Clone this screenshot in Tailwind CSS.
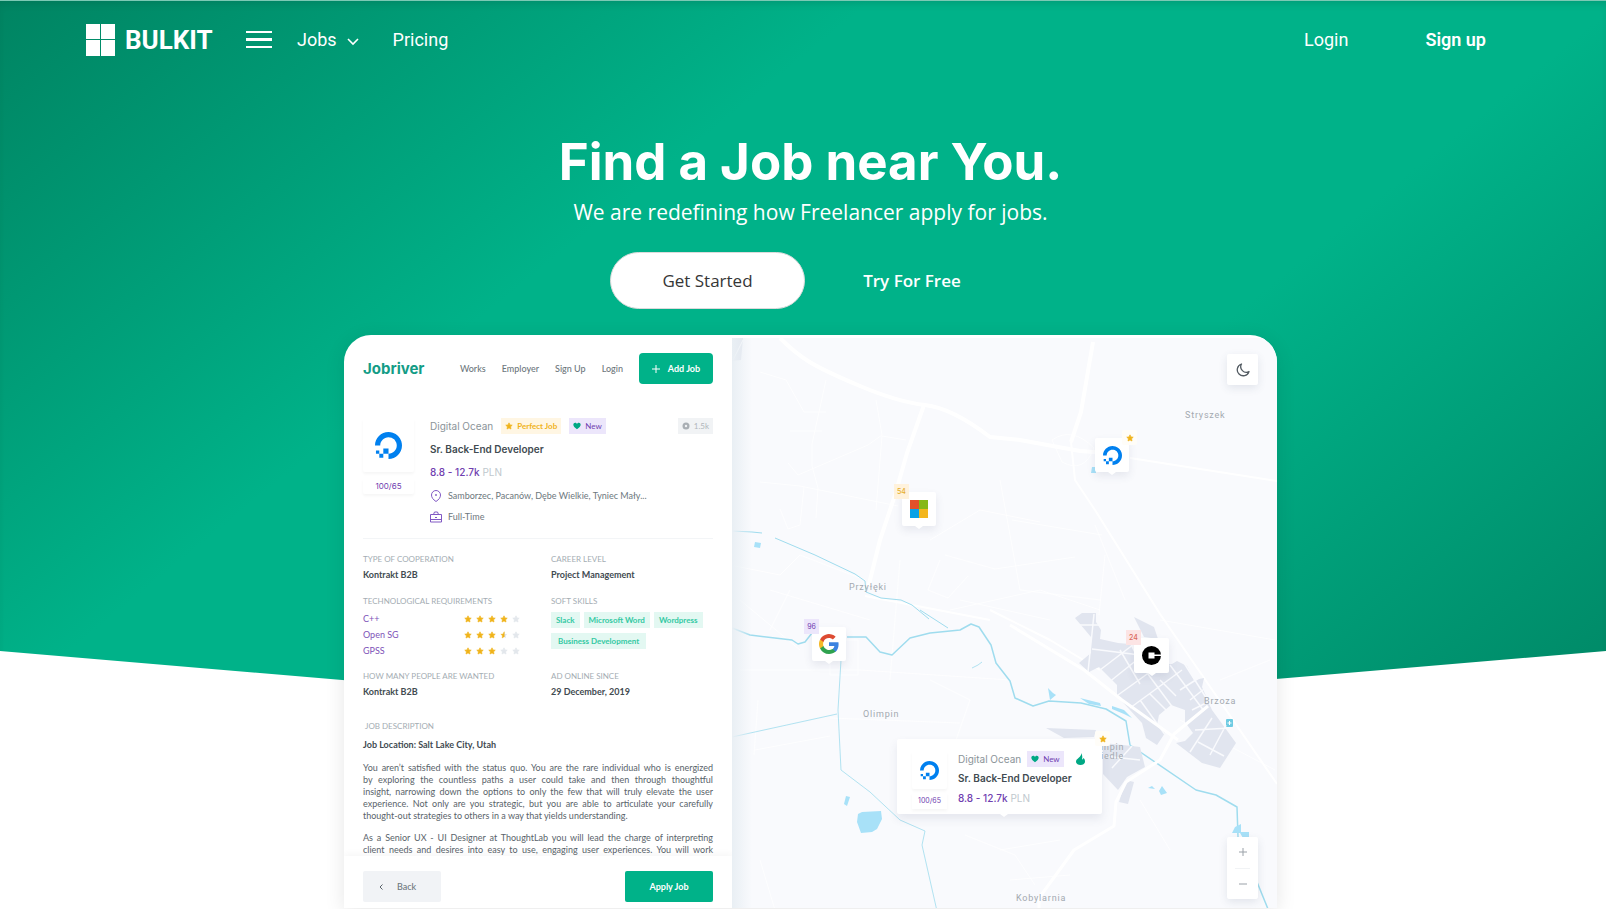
<!DOCTYPE html>
<html lang="en">
<head>
<meta charset="utf-8">
<meta name="viewport" content="width=device-width, initial-scale=1">
<title>Bulkit</title>
<script src="https://cdn.jsdelivr.net/npm/@tailwindcss/browser@4"></script>
</head>
<body class="bg-white font-['Inter',sans-serif]">
<svg class="hidden" aria-hidden="true">
  <symbol id="ocean" viewBox="0 0 24 24"><path fill="#0080ef" d="M12.04 0C5.408-.02.005 5.37.005 11.992h4.638c0-4.923 4.882-8.731 10.064-6.855a6.95 6.95 0 014.147 4.148c1.889 5.177-1.924 10.055-6.84 10.064v-4.61H7.391v4.623h4.61V24c7.86 0 13.967-7.588 11.397-15.83-1.115-3.59-3.985-6.446-7.577-7.575A12.8 12.8 0 0012.039 0zM7.39 19.362H3.828v3.564H7.39zm-3.563 0v-2.978H.85v2.978z"/></symbol>
  <symbol id="star" viewBox="0 0 24 24"><path fill="currentColor" stroke="currentColor" stroke-width="2" stroke-linejoin="round" d="M12 2.500l2.900 6.300 6.800.8-5 4.700 1.300 6.800L12 17.700l-6 3.400 1.300-6.800-5-4.700 6.800-.8z"/></symbol>
  <symbol id="halfstar" viewBox="0 0 24 24"><path fill="#dfe3ea" d="M12 2.500l2.900 6.300 6.800.8-5 4.700 1.300 6.800L12 17.700z"/><path fill="#f0b31a" stroke="#f0b31a" stroke-linejoin="round" d="M13 2.500v15l-7 3.600 1.300-6.800-5-4.700 6.800-.8L12 2.500z"/></symbol>
  <symbol id="heart" viewBox="0 0 24 24"><path fill="#00a884" d="M12 22C5 17 1 13 1 8.500 1 5 3.500 2.500 6.500 2.500c2.500 0 4.500 1.500 5.500 3.500 1-2 3-3.500 5.500-3.500C20.500 2.500 23 5 23 8.500 23 13 19 17 12 22z"/></symbol>
</svg>

<div class="relative isolate min-h-screen overflow-hidden">
  <div class="absolute inset-x-0 top-0 -z-10 h-[719px] border-t border-[#7cc9b4] bg-[linear-gradient(141deg,#008462_0%,#00b289_35%,#00b289_65%,#008765_100%)] shadow-[inset_0_6px_8px_-4px_rgba(0,60,40,0.2)] [clip-path:polygon(0_0,100%_0,100%_651px,50%_100%,0_651px)]"></div>

  <header class="flex h-20 items-center pl-[86px] pr-[120px] font-['Roboto',sans-serif] text-lg text-white">
    <a href="#" class="flex items-center gap-2.5" aria-label="Bulkit home">
      <svg class="h-8 w-[29px]" viewBox="0 0 29 32" fill="#fff"><path d="M0 0h14v15H0zM15 0h14v15H15zM0 16h14v16H0zM15 16h14v16H15z"/></svg>
      <span class="w-[88px] font-['Roboto',sans-serif] text-[26px] leading-8 font-bold">BULKIT</span>
    </a>
    <button type="button" class="ml-[33px]" aria-label="Menu">
      <svg class="h-[18px] w-[26px]" viewBox="0 0 26 18" fill="#fff"><path d="M0 0h26v2H0zM0 7h26v3H0zM0 15h26v2H0z"/></svg>
    </button>
    <nav class="ml-[25px] flex items-center gap-[34px]">
      <a href="#" class="flex items-center gap-2.5">Jobs
        <svg class="mt-1 h-2 w-3" viewBox="0 0 12 8" fill="none" stroke="#fff" stroke-width="1.600"><path d="M1 1l5 5 5-5"/></svg>
      </a>
      <a href="#">Pricing</a>
    </nav>
    <div class="ml-auto flex gap-[77px]">
      <a href="#">Login</a>
      <a href="#" class="font-semibold">Sign up</a>
    </div>
  </header>

  <main class="pl-[15px]">
    <section class="flex flex-col items-center pt-[50px] text-center text-white">
      <h1 class="text-[51px] leading-[64px] font-bold">Find a Job near You.</h1>
      <p class="mt-[3px] font-['Open_Sans',sans-serif] text-[21px] leading-[30px]">We are redefining how Freelancer apply for jobs.</p>
      <div class="mt-[25px] flex gap-2 font-['Open_Sans',sans-serif] text-[17px]">
        <button type="button" class="h-[57px] w-[195px] rounded-full border border-[#dbdbdb] bg-white text-[#363636]">Get Started</button>
        <button type="button" class="h-[57px] w-[198px] font-semibold">Try For Free</button>
      </div>
    </section>

    <section class="mx-auto mt-[26px] flex w-full max-w-[933px] overflow-hidden rounded-t-[27px] bg-white shadow-[0_4px_20px_rgba(0,0,0,0.1)]">
      <div class="flex w-[388px] shrink-0 flex-col pt-[18px] font-['Lato',sans-serif] text-[9px] text-[#6d777d]">
        <div class="px-[19px]">
          <div class="flex h-[31px] items-center">
            <a href="#" class="font-['Inter',sans-serif] text-[15px] leading-7 font-bold text-[#149c86]">Jobriver</a>
            <nav class="ml-auto flex gap-4 font-medium">
              <a href="#">Works</a><a href="#">Employer</a><a href="#">Sign Up</a><a href="#">Login</a>
            </nav>
            <button type="button" class="ml-4 flex h-[31px] w-[74px] items-center justify-center gap-2 rounded-sm bg-[#00b289] font-bold text-white">
              <svg class="size-2" viewBox="0 0 8 8" stroke="#fff"><path d="M4 0v8M0 4h8"/></svg>Add Job</button>
          </div>

          <div class="mt-[34px] flex gap-4">
            <div class="w-[51px]">
              <div class="grid h-[54px] place-items-center rounded-xs shadow-[0_2px_3px_rgba(0,0,0,0.04)]"><svg class="size-[27px]"><use href="#ocean"/></svg></div>
              <div class="mt-1.5 h-4 rounded-xs text-center font-['Inter',sans-serif] text-[8px] leading-4 text-[#7040b0] shadow-[0_2px_3px_rgba(0,0,0,0.04)]">100/65</div>
            </div>
            <div class="flex-1">
              <div class="flex h-4 items-center">
                <span class="font-['Inter',sans-serif] text-[10px] text-[#8b9499]">Digital Ocean</span>
                <span class="ml-2 flex h-4 items-center gap-1 bg-[#fff6e3] px-1 text-[8px] font-bold text-[#f0b31a]"><svg class="size-2"><use href="#star"/></svg>Perfect Job</span>
                <span class="ml-2 flex h-4 items-center gap-1 bg-[#ece6fb] px-1 text-[8px] text-[#7040b0]"><svg class="size-2"><use href="#heart"/></svg>New</span>
                <span class="ml-auto flex h-4 items-center gap-1 bg-[#f1f3f5] px-1 text-[8px] text-[#b0b6bb]"><svg class="size-2" viewBox="0 0 8 8"><circle cx="4" cy="4" r="3.500" fill="#a9afb4"/><circle cx="4" cy="4" r="1.200" fill="#f1f3f5"/></svg>1.5k</span>
              </div>
              <h2 class="mt-[7px] font-['Inter',sans-serif] text-[10px] leading-4 font-semibold text-[#424b51]">Sr. Back-End Developer</h2>
              <p class="mt-[7px] font-['Inter',sans-serif] text-[10px] leading-4 text-[#c0c8ce]"><span class="font-medium text-[#7040b0]">8.8 - 12.7k</span> PLN</p>
              <p class="mt-2 flex h-4 items-center gap-1.5"><svg class="size-3" viewBox="0 0 12 12" fill="none" stroke="#8159c4"><path d="M6 11.500C3 9.500 1.500 7.500 1.500 5a4.500 4.500 0 019 0c0 2.500-1.500 4.500-4.500 6.500z"/><circle cx="6" cy="5" r=".6"/></svg>Samborzec, Pacanów, Dębe Wielkie, Tyniec Mały...</p>
              <p class="mt-[5px] flex h-4 items-center gap-1.5"><svg class="size-3" viewBox="0 0 12 12" fill="none" stroke="#8159c4"><path d="M.5 3.500h11v7.500H.5zM3.500 3.500l1-2.500h3l1 2.500M.5 8.500h11M5 6.500h2"/></svg>Full-Time</p>
            </div>
          </div>

          <div class="mt-[13px] grid grid-cols-[188px_1fr] border-t border-[#f3f5f7] pt-3.5 leading-3">
            <div>
              <h3 class="text-[8px] leading-3 text-[#a4adb3]">TYPE OF COOPERATION</h3>
              <p class="mt-1 font-bold text-[#424b51]">Kontrakt B2B</p>
              <h3 class="mt-3.5 text-[8px] leading-3 text-[#a4adb3]">TECHNOLOGICAL REQUIREMENTS</h3>
              <ul class="mt-1.5 flex flex-col gap-1 text-[#7e53b8]">
                <li class="flex h-3 items-center">C++<span class="ml-auto mr-[31px] flex gap-1 text-[#f0b31a]"><svg class="size-2"><use href="#star"/></svg><svg class="size-2"><use href="#star"/></svg><svg class="size-2"><use href="#star"/></svg><svg class="size-2"><use href="#star"/></svg><svg class="size-2 text-[#e3e7ec]"><use href="#star"/></svg></span></li>
                <li class="flex h-3 items-center">Open SG<span class="ml-auto mr-[31px] flex gap-1 text-[#f0b31a]"><svg class="size-2"><use href="#star"/></svg><svg class="size-2"><use href="#star"/></svg><svg class="size-2"><use href="#star"/></svg><svg class="size-2"><use href="#halfstar"/></svg><svg class="size-2 text-[#e3e7ec]"><use href="#star"/></svg></span></li>
                <li class="flex h-3 items-center">GPSS<span class="ml-auto mr-[31px] flex gap-1 text-[#f0b31a]"><svg class="size-2"><use href="#star"/></svg><svg class="size-2"><use href="#star"/></svg><svg class="size-2"><use href="#star"/></svg><svg class="size-2 text-[#e3e7ec]"><use href="#star"/></svg><svg class="size-2 text-[#e3e7ec]"><use href="#star"/></svg></span></li>
              </ul>
              <h3 class="mt-[13px] text-[8px] leading-3 text-[#a4adb3]">HOW MANY PEOPLE ARE WANTED</h3>
              <p class="mt-1 font-bold text-[#424b51]">Kontrakt B2B</p>
            </div>
            <div>
              <h3 class="text-[8px] leading-3 text-[#a4adb3]">CAREER LEVEL</h3>
              <p class="mt-1 font-bold text-[#424b51]">Project Management</p>
              <h3 class="mt-3.5 text-[8px] leading-3 text-[#a4adb3]">SOFT SKILLS</h3>
              <div class="mt-[5px] flex flex-wrap gap-x-1 gap-y-[5px] text-[8px] leading-4 font-bold text-[#34c9a3]">
                <span class="bg-[#e3f8f2] px-[5px]">Slack</span><span class="bg-[#e3f8f2] px-[5px]">Microsoft Word</span><span class="bg-[#e3f8f2] px-[5px]">Wordpress</span><span class="bg-[#e3f8f2] px-[7px]">Business Development</span>
              </div>
              <h3 class="mt-[21px] text-[8px] leading-3 text-[#a4adb3]">AD ONLINE SINCE</h3>
              <p class="mt-1 font-bold text-[#424b51]">29 December, 2019</p>
            </div>
          </div>

          <h3 class="mt-[22px] pl-0.5 text-[8px] leading-3 text-[#a4adb3]">JOB DESCRIPTION</h3>
          <p class="mt-[7px] leading-3 font-bold text-[#424b51]">Job Location: Salt Lake City, Utah</p>
          <p class="mt-[11px] leading-3 text-[#59636a]">
            <span class="block [text-align-last:justify]">You aren’t satisfied with the status quo. You are the rare individual who is energized</span>
            <span class="block [text-align-last:justify]">by exploring the countless paths a user could take and then through thoughtful</span>
            <span class="block [text-align-last:justify]">insight, narrowing down the options to only the few that will truly elevate the user</span>
            <span class="block [text-align-last:justify]">experience. Not only are you strategic, but you are able to articulate your carefully</span>
            <span class="block">thought-out strategies to others in a way that yields understanding.</span>
          </p>
          <p class="mt-2.5 leading-3 text-[#59636a]">
            <span class="block [text-align-last:justify]">As a Senior UX - UI Designer at ThoughtLab you will lead the charge of interpreting</span>
            <span class="block [text-align-last:justify]">client needs and desires into easy to use, engaging user experiences. You will work</span>
          </p>
        </div>
        <div class="flex justify-between px-[19px] pt-[15px] pb-1.5 shadow-[0_-3px_6px_rgba(0,0,0,0.03)]">
          <button type="button" class="flex h-[31px] w-[78px] items-center gap-3.5 rounded-xs bg-[#f1f3f6] pl-4 font-medium"><svg class="h-1.5 w-1" viewBox="0 0 4 6" fill="none" stroke="#59636a"><path d="M3.500.5L1 3l2.500 2.500"/></svg>Back</button>
          <button type="button" class="h-[31px] w-[88px] rounded-xs bg-[#00b289] font-bold text-white">Apply Job</button>
        </div>
      </div>

      <div class="relative mt-[3px] flex-1 overflow-hidden bg-[#f9fafd]">
        <svg class="absolute inset-0 size-full" viewBox="732 338 545 571" preserveAspectRatio="xMidYMin slice" fill="none" stroke-linejoin="round" font-family="Roboto, sans-serif">
          <path fill="#e2e6ef" d="M732 338h11l-2 22-9 1z"/><path stroke="#fff" d="M743 340l-10 20"/>
          <g stroke="#fff" stroke-opacity=".75">
            <path d="M826 380l-14 64v22l6 22-2 30M760 482l40 4 98 20M876 400l6 35-14 10-70 30-10-12M790 431h32M906 440l-24-4-6 74M760 372l26 8 18 32h22M780 509l8 20 12-4 4-38M730 565l50 10 20-20 65 25M770 590l100 30M930 540l50-30 60 12M945 555l50 14 80-12M960 600l90 20M900 560l-10 120M1012 520l90 15M1020 590l80 10M1105 555l-6 60M1160 620l115 20M1125 600l-30-75M740 670h120l150 10M755 750l75-14M930 680l40 20-14 40M758 700l-4 55M830 718l130 5M760 860l15 50M965 835l50 20 20 30M1100 610l-60-20-90 20M1180 720l95 50M1220 680l50-20M1140 800l30 50M1010 880l60-5M1060 840l-60 10"/>
            <path d="M1052 440q20 -14 42 8-10 26-32 14zM830 640h28v35h-28zM940 560l-12 30 20 8 20-22M740 600l60 50M790 590l-20 40M1000 480l20 110"/>
          </g>
          <g stroke="#fff" stroke-width="3"><path stroke-width="4" d="M780 338q14 14 28 23t52 25 65 19 65 32l30 3 60 11 40 3"/><path d="M924 405l-17 48-12 42-15 45-12 48M1093 342l-12 70-10 30" stroke-width="4"/><path d="M1130 458l147 23M1071 442l4 38 20 30 65 104 117 170M865 596l125 24M990 610l60 30 50 30" stroke-width="2"/></g>
          <g stroke="#9fdcee" stroke-width="1.500">
            <path d="M732 531l20 1 10 1M775 538l40 17 40 19 10 7 1 11 15 6 20 2 11 5 17 14M920 610l28 18" stroke-width="1"/>
            <path d="M732 628l18 7 42 5 6 4 7-2 7-9M847 637h19l14 15 12 3 18-17 20-5 30-3 11-6 8 3 12 18 5 18 14 18 5 17 18 8 16-5 32 2 25 6 20 12 4 24 66 45 20 5 21 12 1 30M1257 882l11 27"/>
            <path stroke-width="1" stroke-opacity=".8" d="M841 660l-3 50 3 60 29 22 30 28 25 11-3 14 15 66M732 737l105-23M972 668l6-3 4-3"/>
          </g>
          <g fill="#a8e1f8"><path d="M857 822l1-8 4-2 19-1 1 8-5 10-5 3-11 1zM844 804l2-8 4 1-3 9zM755 542l6 1-1 5-6-1zM1048 688l5 5 3 2-6 5zM1080 698l8 2 12 3 1 3-12-2zM1112 706l12 4 8 8-8-4-12-5zM1148 788l4-2 3 3zM1162 786l5 7-6 2-2-4zM1235 827l6-3v8h8v6h-6l-3-5h-8zM1092 467h4v6h-5z"/><rect x="1226" y="719" width="7" height="8" rx="1" fill="#6fcbe2"/></g>
          <path stroke="#fff" d="M1229.500 721v4M1227.500 723h4"/>
          <g fill="#e1e5ef">
            <path d="M1075 618l7-5h14v9l5 8-1 9 18 4 12 1 10 20h32l5-3 10 5 7 14 10-2-2 9 10 23 24 33-16 25-18-5-26-20 9-2 8-8-8-11v-12l-14-5-12 10-2 10 8 8-8 12-11-7-4-15-25-27v-11l-18-18-10 5-10-9 12-10v-16z"/>
            <path d="M1134 617l20 10 4 12-14-2zM1046 728l50 2-2 7-30 1zM1103 743l20 2 17 2 5 20-18 10-9 13-15-16zM1126 780l8 2-6 22-9-2z"/>
          </g>
          <g stroke="#f9fafd" stroke-width="1.500"><path d="M1094 614l-6 58M1077 625h22M1092 649l48 6M1100 670l34-26M1108 683l40-32M1118 695l50-36M1130 708l52-38M1142 666l40 54M1120 650l20 34M1170 665l34 46M1184 663l28 44M1190 700l18-14M1180 690l22-14M1192 710l20-10M1195 730l35-2M1190 752l22-34M1210 755l16-30M1198 742l26 14M1160 680l16 16M1150 694l16 16M1140 700l26 36M1104 756l36 4M1112 768l20-22"/></g>
          <path stroke="#fff" stroke-width="3" d="M1010 625l74 45 38 30 56 40M1208 706l-34 28-14 26-34 22-10 20-2 24-40 24-35 48v10"/>
          <g fill="#a3a9b0" font-size="9" letter-spacing=".8"><text x="1185" y="418">Stryszek</text><text x="849" y="590">Przyłęki</text><text x="863" y="717">Olimpin</text><text x="1204" y="704">Brzoza</text><text x="1016" y="901">Kobylarnia</text><text x="1101" y="750">mpin</text><text x="1101" y="759">iedle</text></g>
        </svg>
        <div class="absolute inset-y-0 left-0 w-5 bg-linear-to-r from-[#e9eff4] to-transparent"></div>

        <button type="button" aria-label="Night mode" class="absolute top-4 right-[19px] grid size-[31px] place-items-center rounded-xs bg-white shadow-[0_3px_8px_rgba(60,70,110,0.12)]"><svg class="size-3.5" viewBox="0 0 14 14" fill="none" stroke="#535b62" stroke-width="1.300" stroke-linejoin="round"><path d="M5.500 1A6 6 0 1013 8.500 5.500 5.500 0 015.500 1z"/></svg></button>

        <div class="absolute top-[154px] left-[170px] grid size-[34px] place-items-center rounded-xs bg-white shadow-[0_4px_8px_rgba(60,70,110,0.1)]">
          <svg class="size-[18px]" viewBox="0 0 18 18"><path fill="#e2512b" d="M0 0h9v9H0z"/><path fill="#86b817" d="M9 0h9v9H9z"/><path fill="#0aa2e6" d="M0 9h9v9H0z"/><path fill="#f3b61d" d="M9 9h9v9H9z"/></svg>
          <svg class="absolute top-full h-[3px] w-2" viewBox="0 0 8 3"><path fill="#fff" d="M0 0h8L4 3z"/></svg>
          <span class="absolute -top-2 -left-2 h-[15px] w-[15px] bg-[#fff2dc] text-center text-[7px] leading-[15px] font-medium text-[#e6ae2c]">54</span>
        </div>
        <div class="absolute top-[100px] left-[363px] grid size-[34px] place-items-center rounded-xs bg-white shadow-[0_4px_8px_rgba(60,70,110,0.1)]">
          <svg class="size-[19px]"><use href="#ocean"/></svg>
          <svg class="absolute top-full h-[3px] w-2" viewBox="0 0 8 3"><path fill="#fff" d="M0 0h8L4 3z"/></svg>
          <span class="absolute -top-2 -right-2 grid size-[15px] place-items-center rounded-xs bg-[#fffdf8] text-[#f0b31a]"><svg class="size-2"><use href="#star"/></svg></span>
        </div>
        <div class="absolute top-[289px] left-20 grid size-[34px] place-items-center rounded-xs bg-white shadow-[0_4px_8px_rgba(60,70,110,0.1)]">
          <svg class="size-5" viewBox="0 0 24 24"><path fill="#3b82e0" d="M23.500 12.300c0-.9-.1-1.600-.2-2.300H12v4.500h6.500a5.600 5.600 0 01-2.400 3.700v3h3.900c2.300-2.100 3.500-5.200 3.500-8.900z"/><path fill="#2fa24f" d="M12 24c3.200 0 6-1.100 8-2.900l-3.900-3a7.200 7.200 0 01-10.800-3.800H1.300v3.100A12 12 0 0012 24z"/><path fill="#f4b92b" d="M5.300 14.300a7.200 7.200 0 010-4.600V6.600h-4a12 12 0 000 10.800z"/><path fill="#dd4b32" d="M12 4.800c1.800 0 3.300.6 4.600 1.800L20 3.200A12 12 0 001.300 6.600l4 3.100A7.100 7.100 0 0112 4.800z"/></svg>
          <svg class="absolute top-full h-[3px] w-2" viewBox="0 0 8 3"><path fill="#fff" d="M0 0h8L4 3z"/></svg>
          <span class="absolute -top-2 -left-2 h-[15px] w-[15px] bg-[#ece6fb] text-center text-[7px] leading-[15px] text-[#7040b0]">96</span>
        </div>
        <div class="absolute top-[300px] left-[402px] grid size-[35px] place-items-center rounded-xs bg-white shadow-[0_4px_8px_rgba(60,70,110,0.1)]">
          <svg class="size-[19px]" viewBox="0 0 19 19"><circle cx="9.500" cy="9.500" r="9.500"/><path fill="#fff" d="M6.500 6.500h6v2H19v1.500h-6.500v2.500h-6z"/></svg>
          <svg class="absolute top-full h-[3px] w-2" viewBox="0 0 8 3"><path fill="#fff" d="M0 0h8L4 3z"/></svg>
          <span class="absolute -top-2 -left-2 h-[15px] w-[15px] bg-[#fce4e4] text-center text-[7px] leading-[15px] font-medium text-[#db6a5c]">24</span>
        </div>

        <article class="absolute top-[401px] left-[165px] flex h-[75px] w-[205px] gap-[11px] rounded-xs bg-white pt-3 pl-[15px] shadow-[0_5px_10px_rgba(60,70,110,0.1)]">
          <div class="w-[35px]">
            <div class="grid h-[38px] place-items-center rounded-xs shadow-[0_2px_3px_rgba(0,0,0,0.04)]"><svg class="size-[19px]"><use href="#ocean"/></svg></div>
            <div class="mt-1 h-4 text-center text-[7px] leading-4 text-[#7040b0] shadow-[0_2px_3px_rgba(0,0,0,0.04)]">100/65</div>
          </div>
          <div>
            <div class="flex h-4 items-center text-[10px] text-[#8b9499]">Digital Ocean
              <span class="ml-1.5 flex h-4 items-center gap-1 bg-[#ece6fb] px-1 font-['Lato',sans-serif] text-[8px] text-[#7040b0]"><svg class="size-2"><use href="#heart"/></svg>New</span>
              <svg class="ml-3 h-3 w-[9px]" viewBox="0 0 9 12"><path fill="#00a884" d="M5 0c.5 2-.5 3-2 4.500C1 6.200 0 7 0 8.500 0 10.500 2 12 4.500 12S9 10.500 9 8.500C9 7 8.500 6 7.500 5 7 6 6.500 6.500 6 6.500 6.500 4 6.500 2 5 0z"/></svg>
            </div>
            <h2 class="mt-[3px] text-[10px] leading-4 font-semibold text-[#424b51]">Sr. Back-End Developer</h2>
            <p class="mt-1 text-[10px] leading-4 text-[#c0c8ce]"><span class="font-medium text-[#7040b0]">8.8 - 12.7k</span> PLN</p>
          </div>
          <span class="absolute -top-2 -right-2 grid size-[15px] place-items-center rounded-xs bg-[#fffdf8] text-[#f0b31a]"><svg class="size-2"><use href="#star"/></svg></span>
          <svg class="absolute top-full left-1/2 h-[3px] w-2" viewBox="0 0 8 3"><path fill="#fff" d="M0 0h8L4 3z"/></svg>
        </article>

        <div class="absolute right-[19px] bottom-[9px] flex h-[62px] w-[31px] flex-col divide-y divide-[#f1f3f5] rounded-xs bg-white px-2 shadow-[0_3px_8px_rgba(60,70,110,0.12)]">
          <button type="button" aria-label="Zoom in" class="grid flex-1 place-items-center"><svg class="size-2" viewBox="0 0 8 8" stroke="#9aa1a8"><path d="M4 0v8M0 4h8"/></svg></button>
          <button type="button" aria-label="Zoom out" class="grid flex-1 place-items-center"><svg class="size-2" viewBox="0 0 8 8" stroke="#9aa1a8"><path d="M0 4h8"/></svg></button>
        </div>
      </div>
    </section>
  </main>
</div>
</body>
</html>
